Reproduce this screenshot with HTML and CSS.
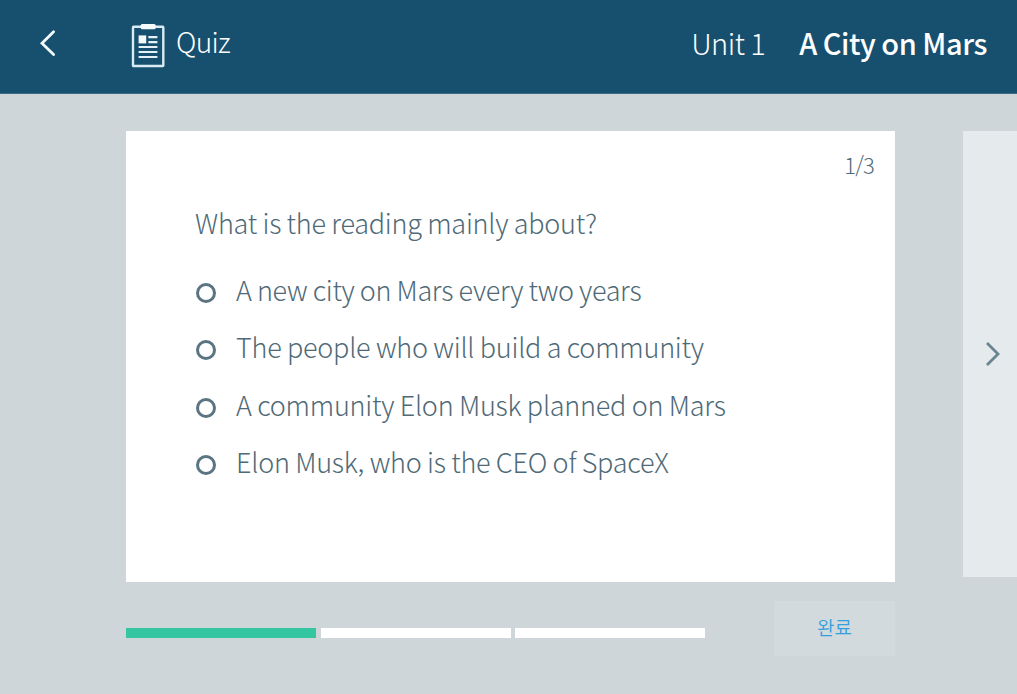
FILE: index.html
```html
<!DOCTYPE html>
<html lang="ko">

<head>
    <meta charset="UTF-8">
    <meta name="viewport" content="width=device-width, initial-scale=1.0">
    <title>Quiz</title>
    <link rel="stylesheet" href="styles.css">
</head>

<body>
    <!-- 상단 헤더 -->
    <header class="header">
        <a class="back" href="#" aria-label="back">
            <svg width="18" height="28" viewBox="0 0 18 28">
                <path d="M14.6 2.8 L3 14.2 L14.6 25.6" />
            </svg>
        </a>
        <svg class="quiz-icon" width="34" height="44" viewBox="0 0 34 44">
            <rect class="paper" x="2" y="2.8" width="30.3" height="39.2" rx="0.6" />
            <rect x="9.7" y="0" width="15" height="5.2" rx="1.5" />
            <rect x="7.6" y="11.4" width="7.6" height="8" />
            <path class="line" d="M17.4 13.2h9M17.4 18.2h9M7.6 23h18.8M7.6 28h18.8M7.6 33h18.8" />
        </svg>
        <h1 class="menu">Quiz</h1>
        <div class="unit">Unit 1</div>
        <div class="title">A City on Mars</div>
    </header>

    <main class="stage">
        <!-- 문제 카드 -->
        <section class="card">
            <div class="page">1/3</div>
            <h2 class="question">What is the reading mainly about?</h2>
            <ul class="options">
                <li><i class="radio"></i><span class="opt1">A new city on Mars every two years</span></li>
                <li><i class="radio"></i><span>The people who will build a community</span></li>
                <li><i class="radio"></i><span>A community Elon Musk planned on Mars</span></li>
                <li><i class="radio"></i><span>Elon Musk, who is the CEO of SpaceX</span></li>
            </ul>
        </section>

        <!-- 다음 문제 -->
        <aside class="next">
            <svg width="18" height="28" viewBox="0 0 18 28">
                <path d="M3 3 L14 14 L3 25" />
            </svg>
        </aside>
    </main>

    <footer class="footer">
        <div class="progress">
            <span class="bar on"></span>
            <span class="bar"></span>
            <span class="bar"></span>
        </div>
        <button class="done" type="button">완료</button>
    </footer>
</body>

</html>
```
FILE: styles.css
```css
* {
    margin: 0;
    padding: 0;
    box-sizing: border-box;
}

body {
    height: 694px;
    overflow: hidden;
    background: #ced6da;
    font-family: "Noto Sans CJK KR", "Noto Sans", sans-serif;
    font-weight: 300;
    color: #4f6a77;
    word-spacing: -1.8px;
}

svg {
    display: block;
    fill: none;
}

h1,
h2 {
    font-weight: 300;
}

/* 헤더 */
.header {
    display: flex;
    height: 94px;
    padding: 0 30px 0 39px;
    background: #17506f;
    border-bottom: 1px solid #3b6a82;
    color: #fff;
    line-height: 40px;
    white-space: nowrap;
}

.back {
    margin-top: 29px;
}

.back path {
    stroke: #f4fafc;
    stroke-width: 2.8;
    stroke-linecap: round;
}

.quiz-icon {
    margin: 24px 0 0 74px;
    fill: #f4fafc;
}

.quiz-icon .paper {
    fill: none;
    stroke: #d9ecf3;
    stroke-width: 2.4;
}

.quiz-icon .line {
    stroke: #e4f2f7;
    stroke-width: 2.2;
}

.menu {
    margin: 21px auto 0 11px;
    font-size: 28px;
    letter-spacing: -0.7px;
}

.unit {
    margin-top: 22px;
    font-size: 29px;
    letter-spacing: -0.5px;
}

.title {
    margin: 22px 0 0 34px;
    font-size: 29px;
    font-weight: 500;
    letter-spacing: -0.42px;
}

/* 카드 영역 */
.stage {
    display: flex;
    justify-content: space-between;
    align-items: flex-start;
    padding: 37px 0 0 126px;
}

.card {
    width: 769px;
    height: 451px;
    padding: 15px 21px 0 69px;
    background: #fff;
}

.page {
    font-size: 22px;
    line-height: 36px;
    letter-spacing: -0.8px;
    text-align: right;
}

.question {
    margin-top: 21px;
    font-size: 27px;
    line-height: 40px;
    letter-spacing: -0.25px;
}

.options {
    margin-top: 20px;
    list-style: none;
}

.options li {
    display: flex;
    align-items: center;
    height: 57.4px;
    padding-bottom: 4.4px;
    font-size: 27px;
    letter-spacing: -0.25px;
}

.options .opt1 {
    letter-spacing: -0.36px;
}

.radio {
    width: 20px;
    height: 20px;
    margin: 7px 20px 0 1px;
    border: 3.4px solid #5b7482;
    border-radius: 50%;
}

.next {
    display: flex;
    align-items: center;
    width: 54px;
    height: 446px;
    padding-left: 21px;
    background: #e5eaed;
}

.next path {
    stroke: #698590;
    stroke-width: 2.8;
}

/* 하단 */
.footer {
    display: flex;
    justify-content: space-between;
    width: 769px;
    margin: 19px 0 0 126px;
}

.progress {
    display: flex;
    gap: 4.5px;
    margin-top: 27px;
}

.bar {
    width: 190px;
    height: 10px;
    background: #fff;
}

.bar.on {
    background: #34c6a0;
}

.done {
    width: 121px;
    height: 55px;
    padding-bottom: 4px;
    border: none;
    background: #d3dade;
    color: #35a0db;
    font: 350 19px "Noto Sans CJK KR", sans-serif;
}
```
